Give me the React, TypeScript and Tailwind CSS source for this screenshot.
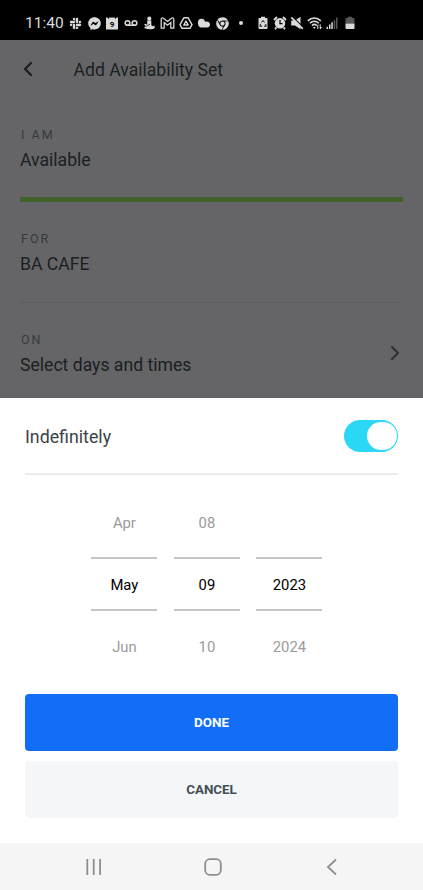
import type { ReactNode } from "react";
import { ChevronLeft, ChevronRight, Voicemail } from "lucide-react";
import { FaChrome, FaFacebookMessenger, FaSlack } from "react-icons/fa";

function CalendarIcon() {
  return (
    <svg viewBox="0 0 14 14" className="size-[14px]">
      <path d="M1 1.500h1.500L3.500 3l1-1.500h5l1 1.500 1-1.500H13v12H1z" fill="currentColor" />
      <text x="7" y="10.500" textAnchor="middle" fontSize="8" fontWeight="700" fill="#000">
        9
      </text>
    </svg>
  );
}

function FigureIcon() {
  return (
    <svg viewBox="0 0 14 14" className="size-[14px]" fill="currentColor">
      <circle cx="7.300" cy="2.700" r="2.100" />
      <path d="M5.200 4.500h4.100v4.800l1.700 1 1.500-.8.300 2.500c-2 1.700-6.500 1.700-10.300.200l.2-1.600 1.800.2-2.500-2.600 1.200-.5 2 1z" />
      <path d="M4.500 10.200 8 8.200" stroke="#000" strokeWidth=".7" />
    </svg>
  );
}

function GmailIcon() {
  return (
    <svg viewBox="0 0 15 14" className="h-[14px] w-[15px] shrink-0" fill="none" stroke="currentColor" strokeWidth="1.300">
      <path d="M1.200 12.200V3.200c0-1.300 1.300-1.600 2.200-.9l4.100 3.200 4.100-3.200c.9-.7 2.200-.4 2.200.9v9H10.800V6.600L7.500 9.200 4.200 6.600v5.600z" />
    </svg>
  );
}

function DriveIcon() {
  return (
    <svg viewBox="0 0 14 14" className="size-[14px]" fill="none" stroke="currentColor" strokeWidth="1.400" strokeLinejoin="round">
      <path d="M5 1.700h4l4 7-2 3.600H3L1 8.700z" />
      <path d="M7 5.200 9.200 9H4.800z" />
    </svg>
  );
}

function CloudIcon() {
  return (
    <svg viewBox="0 0 14 14" className="size-[14px]" fill="currentColor">
      <path d="M4.300 2.800a3.600 3.600 0 0 1 3.700 3 3 3 0 0 1 1.700-.2c1.700 0 3.300 1.200 3.300 3s-1.300 3-3 3H4.500C2.300 11.600.9 9.500.9 6.700c0-2.300 1.400-3.900 3.400-3.900z" />
    </svg>
  );
}

function RecycleBatteryIcon() {
  return (
    <svg viewBox="0 0 14 14" className="size-[14px]">
      <path d="M5 .8h4V2h1.500c.6 0 1 .4 1 1v9c0 .6-.4 1-1 1h-7c-.6 0-1-.4-1-1V3c0-.6.4-1 1-1H5z" fill="currentColor" />
      <path d="m5.500 6.500 1.500-2 1.500 2M9.500 8l.8 2.200H8M6.200 10.200H3.800l.9-2.300" fill="none" stroke="#000" strokeWidth=".9" />
    </svg>
  );
}

function AlarmIcon() {
  return (
    <svg viewBox="0 0 14 14" className="size-[14px]" fill="none" stroke="currentColor">
      <circle cx="7" cy="7.300" r="5.200" fill="currentColor" stroke="none" />
      <path d="M1 4 4 1M13 4l-3-3M3.500 11.500 2 13M10.500 11.500 12 13" strokeWidth="1.800" />
      <path d="M7 4v3.700h2.500" stroke="#000" strokeWidth="1.200" />
    </svg>
  );
}

function MuteIcon() {
  return (
    <svg viewBox="0 0 14 14" className="size-[14px]">
      <path d="M1.200 4.500h3.800L10.500.8v12.400L5 9.500H1.200z" fill="currentColor" />
      <path d="m2.700.8 11 11" stroke="#000" strokeWidth="1.100" />
      <path d="m1.300 1.300 11.500 11.500" stroke="currentColor" strokeWidth="1.700" />
    </svg>
  );
}

function WifiIcon() {
  return (
    <svg viewBox="0 0 16 14" className="h-[14px] w-4 shrink-0" fill="none" stroke="currentColor">
      <path d="M.8 4.900c3.700-3.900 9.300-3.900 13 0M2.800 7.300c2.700-2.700 6.300-2.700 9 0M4.900 9.600c1.500-1.500 3.300-1.500 4.800 0" strokeWidth="1.600" />
      <path d="M5.800 11h3L7.300 13z" fill="currentColor" stroke="none" />
      <path d="M9.600 10.200 11.300 8v5h-1v-2.800zM12.700 8.200h1v2.900h1.500L13.200 13.500l-.5-1z" fill="currentColor" stroke="none" />
    </svg>
  );
}

function SignalIcon() {
  return (
    <svg viewBox="0 0 12 14" className="h-[14px] w-3" fill="currentColor">
      <path d="M.5 10.700H2V13H.5zM3 8.500h1.500V13H3zM5.300 6.300h1.500V13H5.300z" />
      <path d="M7.700 4.200h1.500V13H7.700zM10 1.500h1.500V13H10z" opacity=".4" />
    </svg>
  );
}

function BatteryIcon() {
  return (
    <svg viewBox="0 0 14 14" className="size-[14px]" fill="currentColor">
      <path d="M5 .8h4V2h1.500c.6 0 1 .4 1 1v4.500h-9V3c0-.6.4-1 1-1H5z" opacity=".4" />
      <path d="M2.500 7.500h9V12c0 .6-.4 1-1 1h-7c-.6 0-1-.4-1-1z" />
    </svg>
  );
}

const notificationIcons: ReactNode[] = [
  <FaSlack size={13} />,
  <FaFacebookMessenger size={13} />,
  <CalendarIcon />,
  <Voicemail size={14} strokeWidth={2.6} />,
  <FigureIcon />,
  <GmailIcon />,
  <DriveIcon />,
  <CloudIcon />,
  <FaChrome size={13} />,
  <span className="size-1 rounded-full bg-current" />,
];

const systemIcons: ReactNode[] = [
  <RecycleBatteryIcon />,
  <AlarmIcon />,
  <MuteIcon />,
  <WifiIcon />,
  <SignalIcon />,
  <BatteryIcon />,
];

function StatusBar() {
  return (
    <div className="flex h-10 shrink-0 items-center bg-black pt-[6px] pl-[25px] text-[#dadada]">
      <span className="w-[41.500px] pt-px text-[15.500px] leading-none whitespace-nowrap">11:40</span>
      <div className="flex w-[187.500px] items-center">
        {notificationIcons.map((icon, i) => (
          <span key={i} className="flex w-[18.4px] shrink-0 justify-center">
            {icon}
          </span>
        ))}
      </div>
      <div className="flex items-center">
        {systemIcons.map((icon, i) => (
          <span key={i} className="flex w-[17.4px] shrink-0 justify-center">
            {icon}
          </span>
        ))}
      </div>
    </div>
  );
}

function Field({ label, value }: { label: string; value: string }) {
  return (
    <div>
      <div className="pl-px text-[12.5px] leading-4 tracking-[2px] text-[#343b3f]">{label}</div>
      <div className="mt-[5px] text-[17.6px] leading-6 text-[#1a1f22]">{value}</div>
    </div>
  );
}

function PickerColumn({ values }: { values: [string, string, string] }) {
  const [previous, current, next] = values;
  return (
    <div className="w-[66px] text-center text-[14.8px] leading-5">
      <div className="h-[44px] text-[#9b9b9b]">{previous}</div>
      <div className="flex h-[54px] items-center justify-center border-y-2 border-[#c4c4c4] pt-[2px] text-black">
        {current}
      </div>
      <div className="pt-[26px] text-[#9b9b9b]">{next}</div>
    </div>
  );
}

export default function App() {
  return (
    <div className="flex h-[890px] w-[423px] flex-col overflow-hidden bg-white font-[Roboto,sans-serif]">
      <StatusBar />

      {/* dimmed page behind the sheet */}
      <div className="h-[358px] shrink-0 bg-[#656567] px-5">
        <header className="flex h-[60px] items-center text-[#1a1f22]">
          <ChevronLeft size={24} strokeWidth={2.4} className="-ml-1 mb-[2px]" />
          <h1 className="ml-[33.500px] text-[17.6px] leading-6">Add Availability Set</h1>
        </header>
        <div className="mt-[27px] h-[75px] border-b-[5px] border-[#40612a]">
          <Field label="I AM" value="Available" />
        </div>
        <div className="mt-[29px] h-[72px] border-b border-[#5d5d60]">
          <Field label="FOR" value="BA CAFE" />
        </div>
        <div className="mt-[29px] flex items-center justify-between">
          <Field label="ON" value="Select days and times" />
          <ChevronRight size={24} strokeWidth={2.2} className="-mr-1 mb-[4px] text-[#2b3235]" />
        </div>
      </div>

      <div className="flex-1 px-[25px]">
        <div className="flex h-[77px] items-center justify-between border-b-2 border-[#ebebeb]">
          <span className="pt-[3px] text-[17.8px] text-[#3c4246]">Indefinitely</span>
          <button
            type="button"
            role="switch"
            aria-checked="true"
            aria-label="Indefinitely"
            className="flex h-8 w-[54px] items-center justify-end rounded-full bg-[#2ad8f6] pr-[1.500px]"
          >
            <span className="h-7 w-[30px] rounded-full bg-white" />
          </button>
        </div>

        <div className="mt-[38px] ml-[66.400px] flex h-[181px] gap-[16.500px]">
          <PickerColumn values={["Apr", "May", "Jun"]} />
          <PickerColumn values={["08", "09", "10"]} />
          <PickerColumn values={["", "2023", "2024"]} />
        </div>

        <button type="button" className="flex h-[57px] w-full items-center justify-center rounded bg-[#126df7] pt-[2px] text-[13.4px] font-bold text-white">
          DONE
        </button>
        <button type="button" className="mt-[10px] flex h-[57px] w-full items-center justify-center rounded bg-[#f4f6f8] pt-[2px] text-[13.4px] font-bold text-[#454e55]">
          CANCEL
        </button>
      </div>

      <nav className="flex h-[47px] shrink-0 items-center justify-between bg-[#f5f5f5] pr-[82px] pl-[85px] text-[#8e8e8e]">
        <svg viewBox="0 0 18 18" className="size-[18px]" fill="none" stroke="currentColor" strokeWidth="1.800">
          <path d="M2.300 1v16M8.700 1v16M15.100 1v16" />
        </svg>
        <svg viewBox="0 0 18 18" className="size-[18px]" fill="none" stroke="currentColor" strokeWidth="1.800">
          <rect x="1.200" y="1.200" width="15.600" height="15.600" rx="4.500" />
        </svg>
        <svg viewBox="0 0 18 18" className="size-[18px]" fill="none" stroke="currentColor" strokeWidth="1.800">
          <path d="M13 1.500 5 9l8 7.500" />
        </svg>
      </nav>
    </div>
  );
}
